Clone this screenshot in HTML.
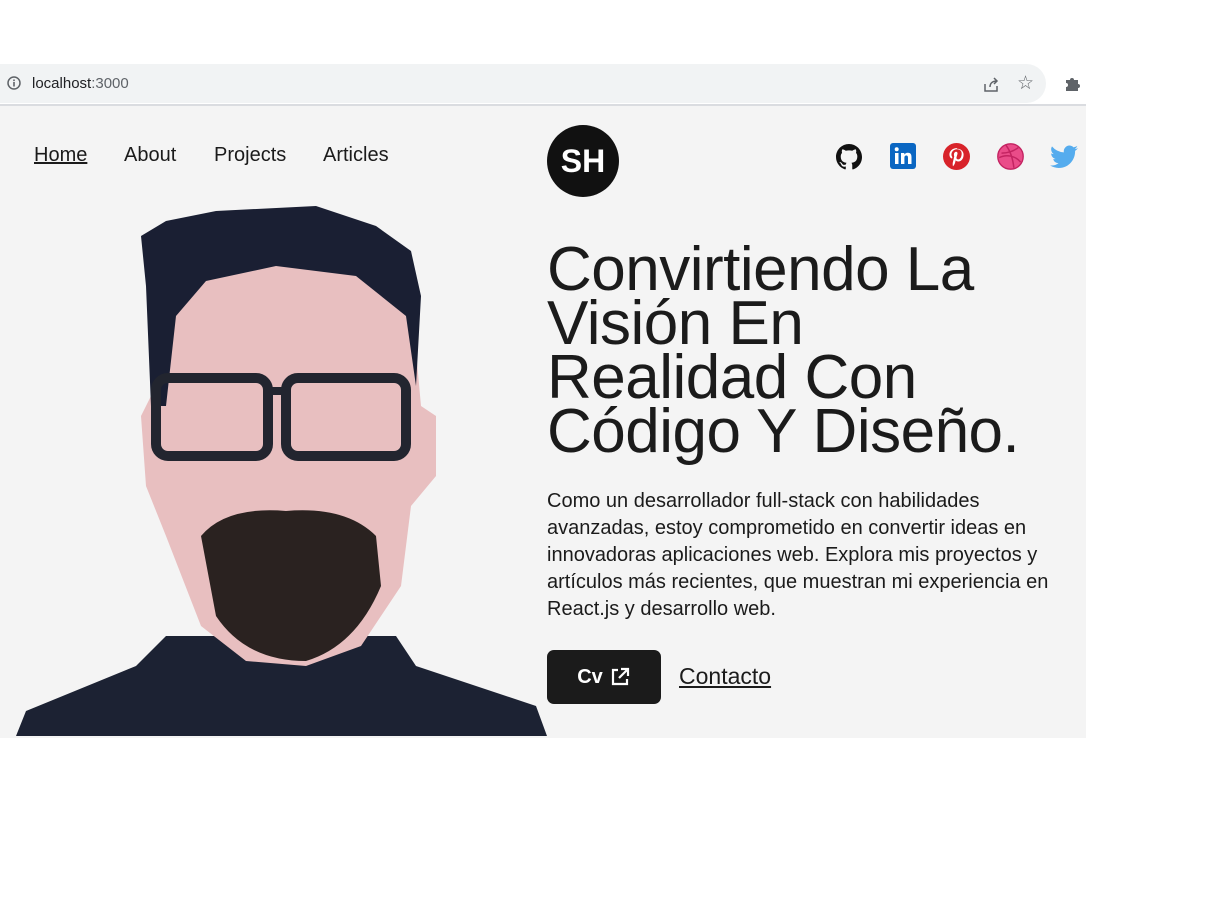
<!DOCTYPE html>
<html><head><meta charset="utf-8"><style>
*{margin:0;padding:0;box-sizing:border-box}
body{width:1214px;height:902px;background:#fff;font-family:"Liberation Sans",Arial,sans-serif;position:relative;overflow:hidden}
.bar{position:absolute;left:-20px;top:64px;width:1066px;height:39px;background:#f1f3f4;border-radius:20px}
.url{position:absolute;left:32px;top:75px;font-size:15px;color:#202124}
.url span{color:#5f6368}
.line{position:absolute;left:0;top:104px;width:1086px;height:2px;background:#dadce0}
.main{position:absolute;left:0;top:106px;width:1086px;height:632px;background:#f4f4f4}
.nav{position:absolute;top:144px;font-size:20px;color:#1b1b1b}
.logo{position:absolute;left:547px;top:125px;width:72px;height:72px;border-radius:50%;background:#111;color:#fff;font-weight:bold;font-size:32px;text-align:center;line-height:72px}
h1{position:absolute;left:547px;top:243px;font-size:62px;line-height:54px;font-weight:normal;color:#1b1b1b;letter-spacing:-0.5px;width:495px}
p{position:absolute;left:547px;top:488px;width:525px;font-size:20px;line-height:27px;color:#1b1b1b}
.cv{position:absolute;left:547px;top:650px;width:114px;height:54px;background:#1b1b1b;border-radius:7px;color:#fff;font-weight:bold;font-size:20px;display:flex;align-items:center;justify-content:center;gap:6px}
.ct{position:absolute;left:679px;top:663px;font-size:23px;color:#1b1b1b;text-decoration:underline}
</style></head><body>
<div class="bar"></div>
<svg style="position:absolute;left:7px;top:76px" width="14" height="14"><circle cx="7" cy="7" r="6" fill="none" stroke="#5f6368" stroke-width="1.5"/><rect x="6.2" y="6" width="1.6" height="4.5" fill="#5f6368"/><rect x="6.2" y="3.5" width="1.6" height="1.6" fill="#5f6368"/></svg>
<div class="url">localhost<span>:3000</span></div>
<svg style="position:absolute;left:982px;top:75px" width="18" height="18"><path d="M3 9v7h12v-5M8 12c0-4 3-6 7-6M12 3l3 3-3 3" fill="none" stroke="#5f6368" stroke-width="1.5"/></svg>
<div style="position:absolute;left:1017px;top:72px;font-size:19px;color:#5f6368">☆</div>
<svg style="position:absolute;left:1063px;top:74px" width="18" height="18"><path d="M3 6h4a2 2 0 0 1 4 0h4v4a2 2 0 0 1 0 4v3H3v-4a2 2 0 0 0 0-4z" fill="#5f6368"/></svg>
<div class="line"></div>
<div class="main"></div>
<div class="nav" style="left:34px;text-decoration:underline">Home</div>
<div class="nav" style="left:124px">About</div>
<div class="nav" style="left:214px">Projects</div>
<div class="nav" style="left:323px">Articles</div>
<div class="logo">SH</div>
<svg style="position:absolute;left:836px;top:144px" width="26" height="26" viewBox="0 0 16 16"><path fill="#111" d="M8 0C3.58 0 0 3.58 0 8c0 3.54 2.29 6.53 5.47 7.59.4.07.55-.17.55-.38v-1.33c-2.23.48-2.7-1.07-2.7-1.07-.36-.92-.89-1.17-.89-1.17-.73-.5.06-.49.06-.49.8.06 1.23.83 1.23.83.72 1.23 1.87.87 2.33.67.07-.52.28-.87.51-1.07-1.78-.2-3.64-.89-3.64-3.95 0-.87.31-1.59.82-2.15-.08-.2-.36-1.02.08-2.12 0 0 .67-.21 2.2.82a7.6 7.6 0 0 1 4 0c1.53-1.04 2.2-.82 2.2-.82.44 1.1.16 1.92.08 2.12.51.56.82 1.27.82 2.15 0 3.07-1.87 3.75-3.65 3.95.29.25.54.73.54 1.48v2.2c0 .21.15.46.55.38A8 8 0 0 0 16 8c0-4.42-3.58-8-8-8z"/></svg>
<svg style="position:absolute;left:890px;top:143px" width="26" height="26" viewBox="0 0 26 26"><rect width="26" height="26" rx="3" fill="#0a66c2"/><rect x="5" y="10" width="3.5" height="11" fill="#fff"/><circle cx="6.7" cy="6.3" r="2" fill="#fff"/><path d="M11 10h3.3v1.6c.6-1 1.8-1.9 3.6-1.9 3 0 3.6 2 3.6 4.6V21H18v-5.8c0-1.4-.1-2.7-1.7-2.7s-1.9 1.2-1.9 2.6V21H11z" fill="#fff"/></svg>
<svg style="position:absolute;left:943px;top:143px" width="27" height="27" viewBox="0 0 24 24"><circle cx="12" cy="12" r="12" fill="#d8232a"/><path d="M12.3 4.5c-4.4 0-6.6 3.1-6.6 5.7 0 1.6.6 3 1.9 3.5.2.1.4 0 .5-.2l.2-.7c.1-.2 0-.3-.1-.5-.4-.5-.7-1.1-.7-2 0-2.5 1.9-4.8 4.9-4.8 2.7 0 4.2 1.6 4.2 3.8 0 2.9-1.3 5.3-3.1 5.3-1 0-1.8-.8-1.5-1.9.3-1.3.9-2.6.9-3.5 0-.8-.4-1.4-1.3-1.4-1 0-1.9 1.1-1.9 2.5 0 .9.3 1.5.3 1.5l-1.2 5.2c-.4 1.5 0 3.4 0 3.6h.3c.1-.1 1.2-1.5 1.6-2.9l.6-2.4c.3.6 1.2 1.1 2.2 1.1 2.9 0 4.8-2.6 4.8-6.1 0-2.7-2.3-5.2-5.7-5.2z" fill="#fff"/></svg>
<svg style="position:absolute;left:997px;top:143px" width="27" height="27" viewBox="0 0 24 24"><circle cx="12" cy="12" r="11.3" fill="#ea4c89" stroke="#c32361" stroke-width="1.2"/><path d="M4 9c5 0 10-1 15-5M2 13c6-3 14-2 19 4M8 2c3 4 6 11 7 20" fill="none" stroke="#c32361" stroke-width="1.3"/></svg>
<svg style="position:absolute;left:1050px;top:145px" width="28" height="24" viewBox="0 0 24 20"><path fill="#55acee" d="M24 2.4c-.9.4-1.8.7-2.8.8 1-.6 1.8-1.6 2.2-2.7-1 .6-2 1-3.1 1.2A4.9 4.9 0 0 0 11.9 6 14 14 0 0 1 1.7.9a4.9 4.9 0 0 0 1.5 6.6c-.8 0-1.6-.2-2.2-.6 0 2.4 1.7 4.4 3.9 4.8-.7.2-1.5.2-2.2.1a4.9 4.9 0 0 0 4.6 3.4A9.9 9.9 0 0 1 0 17.2 14 14 0 0 0 7.5 19.4c9.1 0 14-7.5 14-14v-.6c1-.7 1.8-1.6 2.5-2.4z"/></svg>
<svg style="position:absolute;left:16px;top:206px" width="531" height="530" viewBox="0 0 531 530">
<path d="M0 530 L10 505 L120 460 L150 430 L380 430 L400 460 L520 500 L531 530Z" fill="#1c2233"/>
<path d="M135 190 L150 80 L200 45 L340 45 L395 90 L405 200 L420 210 L420 270 L395 300 L385 380 L345 440 L290 460 L230 455 L185 420 L150 330 L130 280 L125 210Z" fill="#e8bfc0"/>
<path d="M135 200 L130 80 L125 30 L150 15 L200 5 L300 0 L360 20 L395 45 L405 90 L400 180 L390 110 L340 70 L260 60 L190 75 L160 110 L150 200Z" fill="#1a1f33"/>
<path d="M185 330 Q210 300 270 305 Q330 300 360 330 L365 380 Q340 440 290 455 Q230 455 200 410Z" fill="#2a2220"/>
<rect x="140" y="172" width="112" height="78" rx="12" fill="none" stroke="#22252f" stroke-width="10"/>
<rect x="270" y="172" width="120" height="78" rx="12" fill="none" stroke="#22252f" stroke-width="10"/>
<path d="M250 185 L272 185" stroke="#22252f" stroke-width="8"/>
</svg>
<h1>Convirtiendo La Visión En Realidad Con Código Y Diseño.</h1>
<p>Como un desarrollador full-stack con habilidades avanzadas, estoy comprometido en convertir ideas en innovadoras aplicaciones web. Explora mis proyectos y artículos más recientes, que muestran mi experiencia en React.js y desarrollo web.</p>
<div class="cv">Cv <svg width="22" height="22" viewBox="0 0 22 22"><path d="M9 4H4v14h14v-5M12 3h7v7M19 3l-9 9" fill="none" stroke="#fff" stroke-width="2.2"/></svg></div>
<div class="ct">Contacto</div>
</body></html>
